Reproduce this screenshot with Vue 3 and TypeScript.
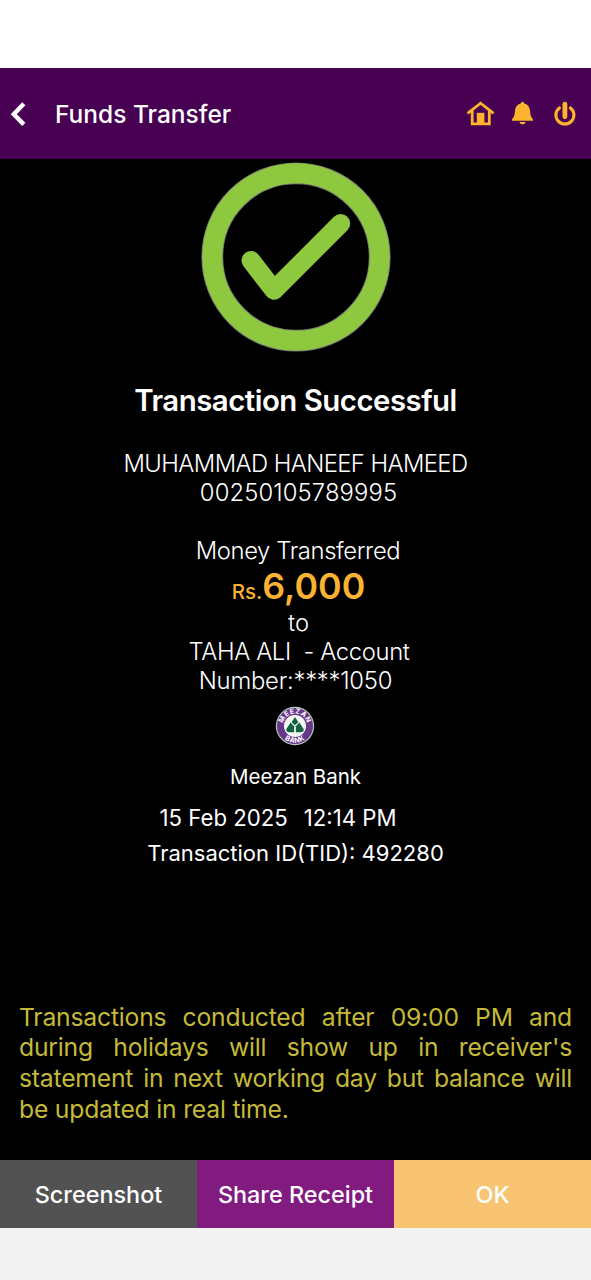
<script setup lang="ts">
interface Action {
  label: string
  kind: string
}

const actions: Action[] = [
  { label: 'Screenshot', kind: 'shot' },
  { label: 'Share Receipt', kind: 'share' },
  { label: 'OK', kind: 'ok' },
]

const notice: string[] = [
  'Transactions conducted after 09:00 PM and',
  "during holidays will show up in receiver's",
  'statement in next working day but balance will',
  'be updated in real time.',
]
</script>

<template>
  <main class="screen">
    <header class="bar">
      <svg class="back" width="16" height="26" viewBox="0 0 16 26">
        <path d="M13.8 2.8 3.8 13.2l10 10.2" fill="none" stroke="#fff" stroke-width="4.4" />
      </svg>
      <h1 class="title">Funds Transfer</h1>
      <svg class="icons" width="112" height="28" viewBox="466 100 112 28">
        <g fill="none" stroke="#fdb32d" stroke-width="2.8">
          <path d="M467.6 113.4 480.6 103.2l13 10.2" />
          <path d="M472.2 110.5v13.4h17.1V110.5" />
        </g>
        <path d="M476.8 112.8h7.6V124h-7.6z" fill="#fdb32d" />
        <path d="M522.5 102c1.2 0 1.7.7 1.8 1.500 3.700.9 5.600 3.800 5.800 7.500.2 4.500 1.100 6.500 2.900 8.200v1.500h-21v-1.500c1.800-1.700 2.700-3.700 2.900-8.200.2-3.700 2.100-6.600 5.800-7.500.1-.8.6-1.500 1.800-1.500zM519.4 122h6.200c-.5 1.600-1.600 2.300-3.100 2.300s-2.600-.7-3.100-2.300z" fill="#fdb32d" />
        <g fill="none" stroke="#fdb32d" stroke-linecap="round">
          <path d="M559.4 107.900a9 9 0 1 0 11 0" stroke-width="3.2" />
          <path d="M564.9 104.200v12.600" stroke-width="4.8" />
        </g>
      </svg>
    </header>

    <section class="body">
      <svg class="success" width="190" height="190" viewBox="0 0 190 190">
        <circle cx="95" cy="95" r="83.7" fill="none" stroke="#777b74" stroke-width="21.8" />
        <circle cx="95" cy="95" r="83.7" fill="none" stroke="#8dc83f" stroke-width="19.9" />
        <path d="M50 98.5 73 128.3 139.7 61.5" fill="none" stroke="#8dc83f" stroke-width="19" stroke-linecap="round" stroke-linejoin="round" />
      </svg>

      <h2 class="headline">Transaction Successful</h2>

      <div class="lines sender">
        <span class="name">MUHAMMAD HANEEF HAMEED</span>
        <span class="acct">00250105789995</span>
      </div>

      <div class="lines">
        <span class="money">Money Transferred</span>
        <span class="amount"><small>Rs.</small><b>6,000</b></span>
        <span class="to">to</span>
        <span class="payee">TAHA ALI&nbsp; - Account</span>
        <span class="number">Number:****1050</span>
      </div>

      <svg class="logo" width="40" height="40" viewBox="0 0 40 40">
        <defs>
          <path id="arc-top" d="M7.8 21.5a12.3 12.3 0 1 1 24.4 0" />
          <path id="arc-bottom" d="M3.2 20a16.8 16.8 0 0 0 33.6 0" />
        </defs>
        <circle cx="20" cy="20" r="19.2" fill="#b9cbbb" />
        <circle cx="20" cy="20" r="18" fill="#67378c" />
        <circle cx="20" cy="20" r="11" fill="#f3f7f4" />
        <text class="seal"><textPath href="#arc-top" startOffset="50%" text-anchor="middle">MEEZAN</textPath></text>
        <text class="seal"><textPath href="#arc-bottom" startOffset="50%" text-anchor="middle">BANK</textPath></text>
        <g fill="#14613f">
          <path d="M20 11l3.400 5.200-3.400 3-3.400-3z" />
          <path d="M15.600 16.600l3.500 3.700v5.900h-5c-2.500 0-3.500-1.700-2.400-3.600z" />
          <path d="M24.400 16.600l-3.500 3.700v5.900h5c2.500 0 3.500-1.700 2.400-3.600z" />
        </g>
      </svg>

      <p class="bank">Meezan Bank</p>
      <p class="when"><span class="date">15 Feb 2025</span><span class="time">12:14 PM</span></p>
      <p class="tid">Transaction ID(TID): 492280</p>

      <p class="notice">
        <span v-for="(line, i) in notice" :key="i" :class="['row', 'row' + i]">{{ line }}</span>
      </p>
    </section>

    <nav class="actions">
      <button v-for="a in actions" :key="a.kind" :class="['action', a.kind]"><span>{{ a.label }}</span></button>
    </nav>
  </main>
</template>

<style>
body {
  margin: 0;
  background: #f3f3f3;
}
</style>

<style scoped>
.screen {
  width: 591px;
  height: 1280px;
  box-sizing: border-box;
  padding-top: 68px;
  background: linear-gradient(#fff 0 100px, #f3f3f3 100px);
  display: flex;
  flex-direction: column;
  overflow: hidden;
  font-family: Inter, "Liberation Sans", sans-serif;
  color: #fff;
}
h1, h2, p { margin: 0; }
.bar {
  height: 91px;
  flex: none;
  background: #470052;
  display: flex;
  align-items: center;
  padding: 0 13px 0 10px;
}
.title {
  margin-left: 29px;
  font-size: 24.5px;
  letter-spacing: 0;
  font-weight: 500;
  white-space: nowrap;
}
.icons { margin-left: auto; }
.body {
  height: 1001px;
  flex: none;
  background: #000;
  display: flex;
  flex-direction: column;
  align-items: center;
}
.success { margin-top: 3px; flex: none; }
.headline {
  margin-top: 29px;
  font-size: 29.4px;
  letter-spacing: -0.5px;
  line-height: 40px;
  font-weight: 600;
  white-space: nowrap;
}
.lines {
  display: flex;
  flex-direction: column;
  align-items: center;
  font-size: 23.8px;
  font-weight: 300;
  line-height: 29px;
  white-space: pre;
}
.sender { margin: 28px 0 29px; }
.name { letter-spacing: -0.57px; }
.acct { letter-spacing: 0.12px; margin-left: 6px; }
.money { letter-spacing: -0.38px; margin-left: 5px; }
.amount {
  height: 43px;
  line-height: 43px;
  margin-left: 6px;
  color: #f9b233;
}
.amount small { font-size: 20.5px; font-weight: 500; }
.amount b { font-size: 35.8px; font-weight: 600; }
.to { margin-left: 6px; }
.payee { letter-spacing: -0.35px; margin-left: 7px; }
.number { letter-spacing: -0.22px; }
.logo { margin: 11px 1px 0 0; flex: none; }
.seal { font-size: 7px; font-weight: 700; fill: #fff; letter-spacing: 0.5px; }
.bank, .when, .tid { white-space: nowrap; line-height: 30px; }
.bank { font-size: 20.5px; margin-top: 16px; }
.when {
  font-size: 22.2px;
  margin-top: 11px;
  display: flex;
  gap: 16px;
  margin-right: 35px;
}
.tid { font-size: 22px; margin-top: 5px; }
.notice {
  width: 553px;
  margin-top: 133.5px;
  font-size: 24.7px;
  letter-spacing: -0.2px;
  line-height: 30.7px;
  color: #c5ba37;
}
.row { display: block; text-align-last: justify; white-space: nowrap; }
.row3 { text-align-last: left; }
.actions {
  height: 68px;
  flex: none;
  display: grid;
  grid-template-columns: repeat(3, 1fr);
}
.action {
  border: 0;
  padding: 0;
  color: #fff;
  font: 500 23.4px Inter, "Liberation Sans", sans-serif;
  white-space: nowrap;
}
.shot { background: #525252; }
.share { background: #811b80; }
.ok { background: #f8c471; }
</style>
